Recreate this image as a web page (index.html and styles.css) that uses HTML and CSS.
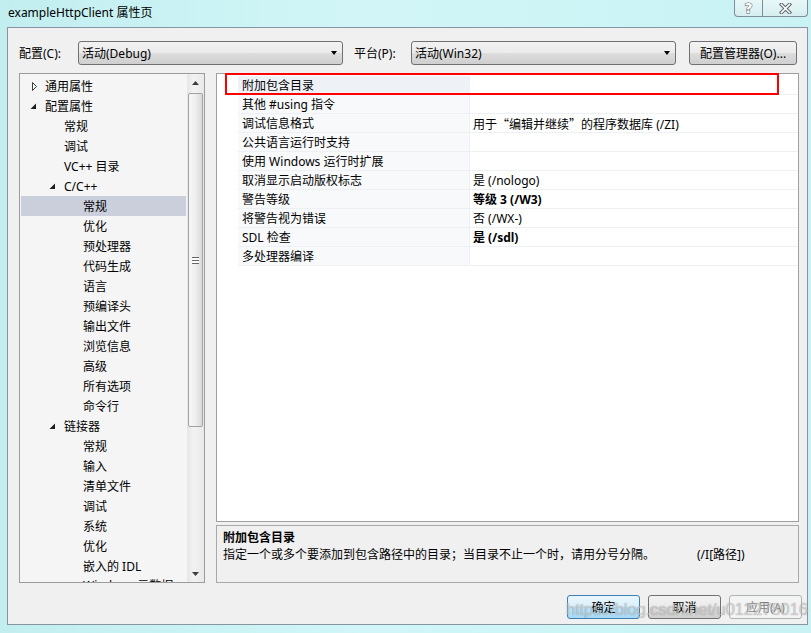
FILE: index.html
```html
<!doctype html>
<html>
  <head>
    <meta http-equiv="Content-Type" content="text/html; charset=UTF-8" />
    <title>exampleHttpClient 属性页</title>
    <link rel="stylesheet" href="styles.css">
  </head>
  <body>
    <div class="window">
      <div class="titlebar">
        <span class="title">exampleHttpClient 属性页</span>
        <div class="caption">
          <span class="cap help">?</span>
          <span class="cap close">
            <svg width="13" height="11" viewBox="0 0 13 11">
              <path d="M2.5 1.5 L10.5 9.5 M10.5 1.5 L2.5 9.5" stroke="#59626b" stroke-width="3.6" stroke-linecap="square" fill="none"/>
              <path d="M2.5 1.5 L10.5 9.5 M10.5 1.5 L2.5 9.5" stroke="#ffffff" stroke-width="1.6" stroke-linecap="square" fill="none"/>
            </svg>
          </span>
        </div>
      </div>

      <div class="client">
        <div class="toolbar">
          <span class="lbl lbl-config">配置(C):</span>
          <div class="combo"><span>活动(Debug)</span><i class="drop"></i></div>
          <span class="lbl lbl-platform">平台(P):</span>
          <div class="combo"><span>活动(Win32)</span><i class="drop"></i></div>
          <button class="btn btn-manager">配置管理器(O)...</button>
        </div>

        <div class="main">
          <div class="tree">
            <ul class="tree-list">
              <li class="lv0"><svg class="tg" width="15" height="20"><polygon points="2.5,6.5 6.5,10.5 2.5,14.5" fill="none" stroke="#3c3c3c"/></svg>通用属性</li>
              <li class="lv0"><svg class="tg" width="15" height="20"><polygon points="6,7.5 6,13 0.5,13" fill="#1e1e1e"/></svg>配置属性</li>
              <li class="lv1"><span class="tg"></span>常规</li>
              <li class="lv1"><span class="tg"></span>调试</li>
              <li class="lv1"><span class="tg"></span>VC++ 目录</li>
              <li class="lv1"><svg class="tg" width="15" height="20"><polygon points="6,7.5 6,13 0.5,13" fill="#1e1e1e"/></svg>C/C++</li>
              <li class="lv2 selected"><span class="tg"></span>常规</li>
              <li class="lv2"><span class="tg"></span>优化</li>
              <li class="lv2"><span class="tg"></span>预处理器</li>
              <li class="lv2"><span class="tg"></span>代码生成</li>
              <li class="lv2"><span class="tg"></span>语言</li>
              <li class="lv2"><span class="tg"></span>预编译头</li>
              <li class="lv2"><span class="tg"></span>输出文件</li>
              <li class="lv2"><span class="tg"></span>浏览信息</li>
              <li class="lv2"><span class="tg"></span>高级</li>
              <li class="lv2"><span class="tg"></span>所有选项</li>
              <li class="lv2"><span class="tg"></span>命令行</li>
              <li class="lv1"><svg class="tg" width="15" height="20"><polygon points="6,7.5 6,13 0.5,13" fill="#1e1e1e"/></svg>链接器</li>
              <li class="lv2"><span class="tg"></span>常规</li>
              <li class="lv2"><span class="tg"></span>输入</li>
              <li class="lv2"><span class="tg"></span>清单文件</li>
              <li class="lv2"><span class="tg"></span>调试</li>
              <li class="lv2"><span class="tg"></span>系统</li>
              <li class="lv2"><span class="tg"></span>优化</li>
              <li class="lv2"><span class="tg"></span>嵌入的 IDL</li>
              <li class="lv2 last"><span class="tg"></span>Windows 元数据</li>
            </ul>
            <div class="vscroll">
              <div class="sb-arrow"><svg width="7" height="4"><polygon points="3.5,0 7,4 0,4" fill="#3d3d3d"/></svg></div>
              <div class="sb-track">
                <div class="sb-thumb"><span class="grip"></span></div>
              </div>
              <div class="sb-arrow"><svg width="7" height="4"><polygon points="0,0 7,0 3.5,4" fill="#3d3d3d"/></svg></div>
            </div>
          </div>

          <div class="props">
            <div class="grid">
              <div class="row sel"><span class="gutter"></span><span class="name">附加包含目录</span><span class="value"></span></div>
              <div class="row"><span class="gutter"></span><span class="name">其他 #using 指令</span><span class="value"></span></div>
              <div class="row"><span class="gutter"></span><span class="name">调试信息格式</span><span class="value">用于<span class="cjk">“</span>编辑并继续<span class="cjk">”</span>的程序数据库 (/ZI)</span></div>
              <div class="row"><span class="gutter"></span><span class="name">公共语言运行时支持</span><span class="value"></span></div>
              <div class="row"><span class="gutter"></span><span class="name">使用 Windows 运行时扩展</span><span class="value"></span></div>
              <div class="row"><span class="gutter"></span><span class="name">取消显示启动版权标志</span><span class="value">是 (/nologo)</span></div>
              <div class="row"><span class="gutter"></span><span class="name">警告等级</span><span class="value bold">等级 3 (/W3)</span></div>
              <div class="row"><span class="gutter"></span><span class="name">将警告视为错误</span><span class="value">否 (/WX-)</span></div>
              <div class="row"><span class="gutter"></span><span class="name">SDL 检查</span><span class="value bold">是 (/sdl)</span></div>
              <div class="row"><span class="gutter"></span><span class="name">多处理器编译</span><span class="value"></span></div>
              <!-- red mark drawn over the first row -->
              <div class="mark"></div>
            </div>
            <div class="desc">
              <p class="desc-title">附加包含目录</p>
              <p class="desc-text">指定一个或多个要添加到包含路径中的目录；当目录不止一个时，请用分号分隔。<span class="switch">(/I[路径])</span></p>
            </div>
          </div>
        </div>

        <div class="footer">
          <button class="btn btn-default">确定</button>
          <button class="btn">取消</button>
          <button class="btn" disabled>应用(A)</button>
        </div>
      </div>

      <div class="watermark">https://blog.csdn.net/u012278016</div>
    </div>
  </body>
</html>
```

FILE: styles.css
```css
* {
  box-sizing: border-box;
}
body {
  margin: 0;
  font-family: "Noto Sans", "Noto Sans CJK SC", sans-serif;
  font-size: 12px;
  color: #000;
  background: #c4eff1;
}
.window {
  position: relative;
  width: 811px;
  height: 633px;
  background: linear-gradient(90deg, #c2eef0 0%, #d2f6f7 45%, #c8f2f4 100%);
  overflow: hidden;
}

/* title bar */
.titlebar {
  display: flex;
  height: 27px;
}
.title {
  padding-left: 8px;
  line-height: 26px;
  font-size: 12px;
}
.caption {
  display: flex;
  margin-left: auto;
  margin-right: 3px;
  height: 17px;
}
.cap {
  display: flex;
  align-items: center;
  justify-content: center;
  height: 17px;
  border: 1px solid #7d8d9b;
  border-top: 0;
  background: linear-gradient(#e9f7f8, #d5eef0);
}
.help {
  width: 29px;
  border-radius: 0 0 0 4px;
  font-family: "DejaVu Sans", sans-serif;
  font-size: 14px;
  font-weight: bold;
  color: #fff;
  -webkit-text-stroke: 1px #59626b;
  paint-order: stroke fill;
}
.close {
  width: 45px;
  border-left: 0;
  border-radius: 0 0 4px 0;
}

/* client area */
.client {
  height: 598px;
  margin: 0 3px 0 7px;
  border: 1px solid #8595a4;
  background: #f0f0f0;
}
.toolbar {
  display: flex;
  align-items: center;
  margin-top: 13px;
  height: 24px;
  padding-left: 11px;
}
.lbl {
  flex: none;
}
.lbl-config {
  width: 59px;
}
.lbl-platform {
  width: 57px;
  margin-left: 11px;
}
.combo {
  display: flex;
  align-items: center;
  width: 265px;
  height: 24px;
  padding-left: 3px;
  border: 1px solid #707070;
  border-radius: 3px;
  background: linear-gradient(#f2f2f2 0%, #ebebeb 50%, #dddddd 51%, #cfcfcf 100%);
}
.drop {
  margin-left: auto;
  margin-right: 5px;
  width: 0;
  height: 0;
  border-left: 3.5px solid transparent;
  border-right: 3.5px solid transparent;
  border-top: 4px solid #000;
}
.btn {
  height: 24px;
  padding: 0;
  font-family: inherit;
  font-size: 12px;
  color: #000;
  border: 1px solid #707070;
  border-radius: 3px;
  background: linear-gradient(#f2f2f2 0%, #ebebeb 50%, #dddddd 51%, #cfcfcf 100%);
}
.btn-manager {
  width: 108px;
  margin-left: 13px;
}

/* tree + property grid */
.main {
  display: flex;
  margin-top: 8px;
  height: 510px;
  padding-left: 11px;
}
.tree {
  display: flex;
  width: 186px;
  height: 510px;
  border: 1px solid #9c9c9c;
  background: #f5f5f5;
}
.tree-list {
  flex: 1;
  margin: 0;
  padding: 2px 0 0 0;
  list-style: none;
  overflow: hidden;
}
.tree-list li {
  display: flex;
  align-items: center;
  height: 20px;
  margin: 0 1px;
  white-space: nowrap;
}
/* the last item is only half inside the box */
.tree-list li.last {
  height: 6px;
  align-items: flex-start;
  overflow: hidden;
}
.tg {
  flex: none;
  display: block;
  width: 15px;
  height: 20px;
}
.lv0 {
  padding-left: 9px;
}
.lv1 {
  padding-left: 28px;
}
.lv2 {
  padding-left: 47px;
}
.tree-list li.selected {
  background: #cbcedb;
}
.vscroll {
  display: flex;
  flex-direction: column;
  width: 17px;
  background: linear-gradient(90deg, #e6e6e6, #f2f2f2 40%, #e9e9e9);
}
.sb-arrow {
  display: flex;
  align-items: center;
  justify-content: center;
  height: 17px;
}
.sb-track {
  flex: 1;
  padding: 2px 1px 0 1px;
}
.sb-thumb {
  display: flex;
  align-items: center;
  justify-content: center;
  height: 334px;
  border: 1px solid #a2a2a2;
  border-radius: 2px;
  background: linear-gradient(90deg, #f6f6f6 0%, #eeeeee 50%, #d9d9d9 100%);
}
.grip {
  width: 7px;
  height: 7px;
  border-top: 1px solid #666;
  border-bottom: 1px solid #666;
  background: linear-gradient(#fff 0, #fff 2px, #666 2px, #666 3px, #fff 3px);
}

.props {
  display: flex;
  flex-direction: column;
  width: 583px;
  margin-left: 11px;
}
.grid {
  position: relative;
  height: 449px;
  padding-top: 2px;
  border: 1px solid #a0a0a0;
  background: #fff;
}
.row {
  display: flex;
  height: 19px;
  line-height: 19px;
}
.gutter {
  width: 21px;
  flex: none;
}
.name {
  width: 232px;
  flex: none;
  padding-left: 4px;
  background: #f8f9fb;
  border-right: 1px solid #edf0f4;
  border-bottom: 1px solid #edf0f4;
  white-space: nowrap;
}
.value {
  flex: 1;
  padding-left: 3px;
  border-bottom: 1px solid #edf0f4;
  white-space: nowrap;
}
.cjk {
  font-family: "Noto Sans CJK SC", sans-serif;
}
.row.sel .name {
  background: #eef1f6;
}
.bold {
  font-weight: bold;
}
.mark {
  position: absolute;
  left: 8px;
  top: -1px;
  width: 554px;
  height: 22px;
  border: 2px solid #f00;
}
.desc {
  height: 58px;
  margin-top: 3px;
  padding: 3px 6px;
  border: 1px solid #a8a8a8;
  background: #f0f0f0;
}
.desc p {
  margin: 0;
  height: 17px;
  line-height: 17px;
  white-space: nowrap;
}
.desc-title {
  font-weight: bold;
}
.switch {
  margin-left: 42px;
}

/* dialog buttons */
.footer {
  display: flex;
  justify-content: flex-end;
  gap: 8px;
  margin-top: 12px;
  padding-right: 5px;
}
.footer .btn {
  width: 73px;
}
.btn-default {
  border-color: #3c7fb1;
  background: linear-gradient(#eaf6fd 0%, #d9f0fc 50%, #bee6fd 51%, #a7d9f5 100%);
}
.btn:disabled {
  color: #838383;
  border-color: #adb2b5;
  background: #f4f4f4;
}

/* blog watermark lying over the buttons */
.watermark {
  position: absolute;
  left: 566px;
  top: 600px;
  font-family: "Liberation Sans", Arial, sans-serif;
  font-size: 17px;
  letter-spacing: -0.3px;
  color: rgba(255, 255, 255, 0.55);
  text-shadow: 0 0 1px rgba(0, 0, 0, 0.45);
  pointer-events: none;
}
```
